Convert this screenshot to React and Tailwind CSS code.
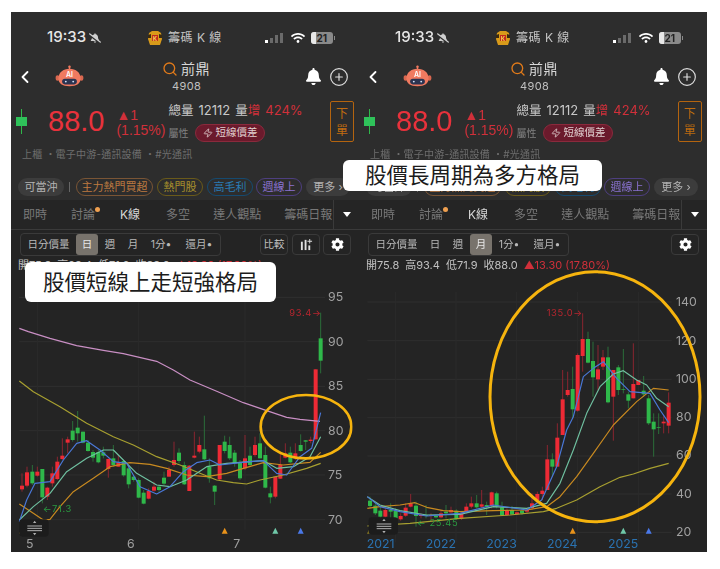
import React from 'react';
import { ChevronLeft, Search, CirclePlus, Zap } from 'lucide-react';
import { FaBell, FaBellSlash, FaWifi, FaCog } from 'react-icons/fa';

const RED = '#ee2a35';
const GREEN = '#2fb84a';

// candles: x, wick top, wick bottom, body top, body bottom, colour (3x zoom coords)
const leftCandles = [
  [66,550,605,587,598,'r'],[81,530,592,547,587,'r'],[97,525,585,545,580,'g'],[112,530,560,545,557,'r'],
  [127,537,640,537,622,'g'],[142,590,630,593,620,'r'],[157,530,590,550,580,'r'],[172,500,570,515,567,'r'],
  [187,445,510,497,507,'r'],[203,440,490,448,458,'r'],[218,393,455,422,450,'g'],[233,363,455,413,430,'g'],
  [249,425,460,425,458,'g'],[264,450,485,458,483,'g'],[279,480,515,486,503,'g'],[295,480,520,486,517,'g'],
  [310,470,505,487,497,'g'],[325,505,563,507,537,'r'],[340,465,530,505,525,'g'],[355,495,530,517,530,'r'],
  [371,510,560,513,556,'g'],[386,530,595,535,583,'g'],[401,555,575,560,570,'g'],[416,565,625,570,623,'g'],
  [431,600,643,608,641,'g'],[446,595,628,603,626,'r'],[462,575,605,590,602,'r'],[477,585,605,590,600,'g'],
  [492,545,585,563,581,'g'],[507,530,560,540,560,'r'],[522,455,530,510,525,'r'],[537,475,520,488,513,'g'],
  [553,515,585,525,583,'g'],[568,525,603,527,603,'r'],[583,425,505,497,503,'r'],[598,440,490,465,485,'r'],
  [613,377,510,478,508,'g'],[628,505,578,530,565,'g'],[644,585,645,587,605,'g'],[659,465,570,465,568,'r'],
  [674,437,490,455,483,'g'],[689,440,510,465,505,'g'],[704,480,530,488,520,'g'],[720,510,570,517,565,'g'],
  [735,435,540,505,535,'r'],[750,470,530,497,525,'g'],[765,440,500,465,495,'r'],[780,430,505,460,505,'g'],
  [796,470,595,495,593,'g'],[811,590,640,610,622,'g'],[826,560,625,560,620,'r'],[841,490,567,525,566,'r'],
  [856,460,505,490,503,'r'],[871,470,520,488,517,'g'],[886,460,510,490,505,'r'],[902,433,485,465,483,'g'],
  [917,450,480,451,455,'g'],[932,440,460,449,453,'r'],[947,238,448,238,448,'r'],[962,68,250,145,212,'g'],
];

const rightCandles = [
  [30,680,715,692,708,'g'],[46,700,735,707,730,'g'],[61,710,745,722,740,'g'],[76,710,745,720,740,'r'],
  [92,700,745,720,725,'g'],[107,715,750,722,745,'g'],[122,730,752,738,748,'r'],[137,700,740,713,737,'r'],
  [152,672,712,700,710,'r'],[168,695,770,707,738,'g'],[183,730,745,735,738,'r'],[198,705,745,735,738,'g'],
  [213,730,752,735,737,'r'],[228,735,745,738,742,'g'],[243,720,745,730,742,'r'],[258,705,745,725,730,'g'],
  [273,710,730,720,727,'r'],[289,718,748,722,746,'g'],[304,725,750,730,746,'r'],[319,700,730,710,725,'r'],
  [334,680,715,700,710,'r'],[350,675,715,700,712,'g'],[365,660,715,703,710,'r'],[380,695,735,705,710,'g'],
  [395,665,715,667,708,'r'],[410,665,715,670,710,'g'],[426,695,738,712,735,'g'],[441,715,738,722,735,'r'],
  [456,708,735,720,733,'g'],[471,725,735,727,733,'r'],[486,715,735,722,730,'g'],[501,715,730,720,725,'r'],
  [516,670,720,700,715,'r'],[532,665,700,672,690,'r'],[547,650,690,662,672,'r'],[562,525,660,568,660,'r'],
  [577,550,620,568,590,'g'],[592,460,590,503,590,'r'],[608,300,495,388,495,'r'],[623,305,380,360,375,'r'],
  [638,290,445,357,418,'g'],[653,250,425,255,422,'r'],[668,130,305,207,258,'r'],[684,185,280,207,278,'g'],
  [699,215,380,273,322,'g'],[714,225,360,298,328,'r'],[729,240,300,262,290,'r'],[744,230,400,262,397,'g'],
  [760,300,512,300,380,'r'],[775,285,375,292,360,'g'],[790,237,370,358,360,'g'],[805,365,415,373,392,'g'],
  [820,220,385,342,385,'r'],[835,330,345,330,345,'r'],[851,318,380,362,373,'g'],[866,375,465,385,460,'g'],
  [881,430,560,455,478,'g'],[896,430,492,472,474,'g'],[911,435,490,455,460,'r'],[926,367,490,398,467,'r'],
];

const leftLines = [
  ['#c98fc4','58,115 85,125 150,145 230,167 310,181 370,191 470,214 520,240 570,270 650,304 730,338 800,362 860,382 900,388 960,394'],
  ['#a8a030','58,273 100,305 180,350 260,400 340,440 400,465 470,500 540,525 600,550 650,570 700,578 740,582 780,570 850,555 920,535 962,520'],
  ['#c98a20','58,642 100,670 130,690 150,688 180,650 220,605 280,565 330,530 390,518 450,523 500,535 560,555 620,560 680,550 720,538 790,518 850,525 930,517 962,487'],
  ['#6fc0a0','58,690 100,650 150,610 200,545 260,505 310,480 340,480 370,510 410,550 470,585 510,590 560,570 620,530 680,520 750,515 790,512 830,535 880,530 930,500 962,440'],
  ['#4a78d8','58,695 80,630 105,580 150,575 190,510 230,460 260,452 300,480 340,515 380,520 420,590 470,612 510,590 550,545 590,518 630,510 660,525 700,520 750,515 790,512 830,550 860,555 900,500 935,475 962,368'],
];

const rightLines = [
  ['#a8a030','22,768 150,760 300,745 450,735 550,725 590,715 650,690 720,650 780,622 820,612 870,595 926,580'],
  ['#c98a20','22,715 60,710 120,705 165,698 200,712 250,722 300,725 400,722 500,720 560,710 600,680 650,620 700,550 760,465 830,395 880,355 926,360'],
  ['#6fc0a0','22,680 60,705 120,722 200,735 300,733 400,710 500,715 560,700 600,640 640,540 680,430 720,350 760,312 790,302 830,330 860,345 890,385 926,410'],
  ['#4a78d8','22,680 60,710 120,725 200,738 300,730 400,705 500,720 545,690 590,590 620,480 640,440 670,320 700,295 730,275 770,325 810,365 870,370 900,420 926,458'],
];

function Chart({ viewBox, candles, lines, grid, vGrid, gridFrom, gridTo, yLabels, labelX, xLabels, xColor, candleW, high, low, markers, handleX, handleY, ring }) {
  return (
    <svg viewBox={viewBox} className="h-full w-full overflow-visible">
      {grid.map(y => <line key={y} x1={gridFrom} x2={gridTo} y1={y} y2={y} stroke="#2f2f2f" strokeWidth="3" />)}
      {vGrid.map(x => <line key={x} x1={x} x2={x} y1={grid[0] - 30} y2={grid[grid.length - 1] + 30} stroke="#2b2b2b" strokeWidth="3" />)}
      {candles.map(([x, wt, wb, bt, bb, c]) => (
        <g key={x}>
          <line x1={x} x2={x} y1={wt} y2={wb} stroke={c === 'r' ? '#8a2530' : '#2b6e3a'} strokeWidth="3" />
          <rect x={x - candleW / 2} y={bt} width={candleW} height={bb - bt} fill={c === 'r' ? RED : GREEN} />
        </g>
      ))}
      {lines.map(([color, pts]) => <polyline key={color} points={pts} fill="none" stroke={color} strokeWidth="3.5" strokeLinejoin="round" />)}
      {yLabels.map(([t, y]) => <text key={t} x={labelX} y={y + 12} fontSize="37" fill="#a0a0a0">{t}</text>)}
      {xLabels.map(([t, x, y]) => <text key={t} x={x} y={y} fontSize="37" fill={xColor}>{t}</text>)}
      <text x={high[1]} y={high[2]} fontSize="28" letterSpacing="2" fill="#b8262f">{high[0]}</text>
      <text x={low[1]} y={low[2]} fontSize="28" letterSpacing="2" fill="#2a9a40">{low[0]}</text>
      {markers.map(([x, y, color]) => <polygon key={x} points={`${x - 9},${y + 9} ${x + 9},${y + 9} ${x},${y - 9}`} fill={color} />)}
      <rect x={handleX} y={handleY} width="88" height="52" rx="10" fill="#1c1c1c" />
      <path d={`M${handleX + 24} ${handleY + 20}h44M${handleX + 24} ${handleY + 27}h44M${handleX + 24} ${handleY + 34}h44`} stroke="#b0b0b0" strokeWidth="3" />
      <path d={`M${handleX + 46} ${handleY + 4}l5 7h-10zM${handleX + 46} ${handleY + 48}l5 -7h-10z`} fill="#b0b0b0" />
      <ellipse cx={ring[0]} cy={ring[1]} rx={ring[2]} ry={ring[3]} fill="none" stroke="#f6b40e" strokeWidth={ring[4]} />
    </svg>
  );
}

function AppMark() {
  return (
    <svg viewBox="0 0 16 16" className="h-4 w-4">
      <path d="M2 3l3-2h6l3 2 1 6-2 6H3L1 9z" fill="#d89a1a" />
      <path d="M5 5h6v6H5z" fill="#c3281e" />
      <path d="M1 5l3-1v4H1zM15 5l-3-1v4h3z" fill="#3a2a10" />
      <text x="8" y="10.5" fontSize="6" fontWeight="700" textAnchor="middle" fill="#f5d050">K</text>
    </svg>
  );
}

function Robot() {
  return (
    <svg viewBox="0 0 30 26" className="h-[24px] w-[29px]">
      <path d="M15 1v4" stroke="#f07a60" strokeWidth="1.5" />
      <circle cx="15" cy="1.8" r="1.3" fill="#f07a60" />
      <rect x="0" y="11" width="4" height="6" rx="2" fill="#d9674f" />
      <rect x="26" y="11" width="4" height="6" rx="2" fill="#d9674f" />
      <path d="M3 15C3 8 8 4 15 4s12 4 12 11c0 5-4 8-12 8S3 20 3 15z" fill="#f07a60" />
      <rect x="7" y="15" width="16" height="6" rx="3" fill="#2b3350" />
      <circle cx="11" cy="18" r="1" fill="#d8e4f8" />
      <circle cx="19" cy="18" r="1" fill="#d8e4f8" />
      <text x="15" y="13.5" fontSize="7.5" fontWeight="600" textAnchor="middle" fill="#fff">AI</text>
    </svg>
  );
}

function Signal() {
  return (
    <div className="flex h-[10px] items-end gap-[2px]">
      <span className="h-[3px] w-[3px] bg-white" />
      <span className="h-[5px] w-[3px] bg-[#6a6a6a]" />
      <span className="h-[8px] w-[3px] bg-[#6a6a6a]" />
      <span className="h-[10px] w-[3px] bg-[#6a6a6a]" />
    </div>
  );
}

function Battery() {
  return (
    <div className="flex items-center gap-[1px]">
      <div className="relative flex h-[12px] w-[22px] items-center justify-center overflow-hidden rounded-[3px] bg-[#8a8a8a]">
        <span className="absolute inset-y-0 left-0 w-[5px] bg-[#e8e8e8]" />
        <span className="relative text-[10px] font-bold leading-none text-[#222]">21</span>
      </div>
      <span className="h-[4px] w-[1px] bg-[#8a8a8a]" />
    </div>
  );
}

function Chip({ className, children }) {
  return <span className={`flex h-[18px] items-center justify-center rounded-full border text-[11px] leading-none ${className}`}>{children}</span>;
}

function Segment({ width, active, children }) {
  return (
    <span className={`flex h-[21px] items-center justify-center rounded-[3px] text-[10.5px] ${width} ${active ? 'bg-[#78736c] text-[#e8e8e8]' : 'text-[#b8b8b8]'}`}>
      {children}
    </span>
  );
}

function Phone({ period, showTools, chart }) {
  return (
    <div className="flex h-[540px] w-[348px] flex-col bg-[#242424] text-[#d0d0d0] blur-[0.45px]">
      <div className="bg-[#2d2d2d]">
        {/* status bar */}
        <div className="flex h-[43px] items-center pl-[36px] pt-[8px]">
          <span className="text-[15px] font-medium text-[#e6e6e6]">19:33</span>
          <FaBellSlash className="ml-[3px] text-[12px] text-[#cfcfcf]" />
          <span className="ml-[46px]"><AppMark /></span>
          <span className="ml-[5px] text-[12px] tracking-[0.5px] text-[#c4c4c4]">籌碼 K 線</span>
          <span className="ml-[43px]"><Signal /></span>
          <FaWifi className="ml-[8px] text-[14px] text-white" />
          <span className="ml-[6px]"><Battery /></span>
        </div>
        {/* header */}
        <div className="relative flex h-[43px] items-center pl-[4px]">
          <ChevronLeft className="h-[24px] w-[20px] text-white" strokeWidth={2.2} />
          <span className="ml-[20px]"><Robot /></span>
          <div className="ml-[78px] flex flex-col">
            <div className="flex items-center">
              <Search className="h-[16px] w-[16px] text-[#e07a1a]" strokeWidth={2} />
              <span className="ml-[3px] text-[14px] leading-[18px] tracking-[0.5px] text-[#d8d8d8]">前鼎</span>
            </div>
            <span className="ml-[10px] text-[11px] leading-[16px] tracking-[0.4px] text-[#c0c0c0]">4908</span>
          </div>
          <FaBell className="ml-[95px] text-[17px] text-white" />
          <CirclePlus className="ml-[7px] h-[20px] w-[20px] text-[#dedede]" strokeWidth={1.4} />
        </div>
        {/* quote */}
        <div className="flex h-[48px] items-start pl-[5px]">
          <div className="relative mt-[11px] h-[25px] w-[12px]">
            <span className="absolute inset-y-0 left-[5px] w-[1px] bg-[#2fb84a]" />
            <span className="absolute left-0 top-[8px] h-[9px] w-[11px] bg-[#2fc25a]" />
          </div>
          <span className="ml-[20px] mt-[7px] font-['Liberation_Sans',sans-serif] text-[29px] leading-[32px] text-[#e8323c]">88.0</span>
          <div className="ml-[12px] mt-[10px] font-['Liberation_Sans',sans-serif] text-[14px] leading-[15px] text-[#d0303a]">
            <div>▲1</div>
            <div>(1.15%)</div>
          </div>
          <div className="ml-[3px] mt-[4px] flex flex-col">
            <div className="flex h-[18px] items-center gap-[5px] text-[13px] text-[#c8c8c8]">
              <span className="text-[12.5px]">總量</span>
              <span>12112</span>
              <span className="text-[12.5px]">量<span className="text-[#d0303a]">增</span></span>
              <span className="text-[#d0303a]">424%</span>
            </div>
            <div className="mt-[4px] flex items-center">
              <span className="text-[10px] text-[#808080]">屬性</span>
              <span className="ml-[7px] flex h-[18px] w-[70px] items-center justify-center gap-[2px] rounded-full border border-[#8a2a3c] bg-[#6b1a2c] text-[10.5px] text-[#e0d0d0]">
                <Zap className="h-[10px] w-[10px]" strokeWidth={2} />
                短線價差
              </span>
            </div>
          </div>
          <div className="ml-auto mr-[5px] mt-[3px] flex h-[41px] w-[24px] flex-col items-center justify-center rounded-[2px] border border-[#b4640f] text-[12px] leading-[17px] text-[#c06c10]">
            <span>下</span>
            <span>單</span>
          </div>
        </div>
        {/* tags */}
        <div className="h-[18px] pl-[11px] text-[10px] leading-[16px] tracking-[0.2px] text-[#6e6e6e]">上櫃 ・電子中游-通訊設備 ・#光通訊</div>
        {/* chips */}
        <div className="flex h-[36px] items-center pb-[1px] pl-[7px] pt-[11px]">
          <Chip className="w-[46px] border-transparent bg-[#3c3c3c] text-[#b4b4b4]">可當沖</Chip>
          <span className="ml-[5px] h-[10px] w-[1px] bg-[#666]" />
          <Chip className="ml-[6px] w-[77px] border-[#7a5535] text-[#bd7a40]">主力熱門買超</Chip>
          <Chip className="ml-[4px] w-[46px] border-[#6a5a1a] text-[#a8902c]">熱門股</Chip>
          <Chip className="ml-[4px] w-[46px] border-[#154a70] text-[#2a7cb5]">高毛利</Chip>
          <Chip className="ml-[3px] w-[46px] border-[#4e3f80] text-[#8a72d0]">週線上</Chip>
          <Chip className="ml-[4px] w-[44px] border-transparent bg-[#3c3c3c] text-[#b4b4b4]">更多 ›</Chip>
        </div>
      </div>
      {/* tabs */}
      <div className="flex h-[30px] items-center border-b border-[#3a3a3a] bg-[#252525] text-[12px] text-[#787878]">
        <div className="flex h-full w-[322px] items-center overflow-hidden whitespace-nowrap pl-[12px]">
          <span>即時</span>
          <span className="relative ml-[24px]">
            討論
            <span className="absolute -right-[5px] top-[1px] h-[5px] w-[5px] rounded-full bg-[#f0a050]" />
          </span>
          <span className="ml-[25px] text-[#d8d8d8]">K線</span>
          <span className="ml-[26px]">多空</span>
          <span className="ml-[23px]">達人觀點</span>
          <span className="ml-[23px]">籌碼日報</span>
        </div>
        <div className="flex h-full flex-1 items-center justify-center border-l border-[#3a3a3a]">
          <span className="border-x-[4px] border-t-[5px] border-x-transparent border-t-white" />
        </div>
      </div>
      {/* toolbar */}
      <div className="flex h-[28px] items-center pl-[9px] pt-[1px]">
        <div className="flex h-[23px] w-[201px] items-center rounded-[4px] border border-[#3a3a3a]">
          <Segment width="w-[55px]">日分價量</Segment>
          <Segment width="w-[22px]" active={period === '日'}>日</Segment>
          <Segment width="w-[24px]" active={period === '週'}>週</Segment>
          <Segment width="w-[22px]" active={period === '月'}>月</Segment>
          <Segment width="w-[34px]">1分•</Segment>
          <Segment width="w-[42px]">還月•</Segment>
        </div>
        {showTools && (
          <div className="ml-[39px] flex h-[21px] w-[28px] items-center justify-center rounded-[4px] border border-[#3a3a3a] text-[10.5px] text-[#c0c0c0]">比較</div>
        )}
        {showTools && (
          <div className="ml-[4px] flex h-[21px] w-[28px] items-center justify-center rounded-[4px] border border-[#3a3a3a]">
            <svg viewBox="0 0 14 14" className="h-[13px] w-[13px]" fill="#e0e0e0">
              <rect x="1" y="4" width="2" height="9" />
              <rect x="5" y="2" width="2" height="11" />
              <rect x="9" y="8" width="2" height="5" />
              <path d="M10 1h1v2h2v1h-2v2h-1V4H8V3h2z" />
            </svg>
          </div>
        )}
        <div className={`flex h-[21px] w-[28px] items-center justify-center rounded-[4px] border border-[#3a3a3a] ${showTools ? 'ml-[3px]' : 'ml-[102px]'}`}>
          <FaCog className="text-[13px] text-white" />
        </div>
      </div>
      {/* ohlc */}
      <div className="flex h-[14px] items-center whitespace-nowrap pl-[7px] text-[11px] leading-none text-[#c0c0c0]">
        開75.8 <span className="ml-[6px]">高93.4</span> <span className="ml-[6px]">低71.9</span> <span className="ml-[6px]">收88.0</span>
        <span className="ml-[6px] text-[#d0303a]">▲13.30 (17.80%)</span>
      </div>
      <div className="relative min-h-0 flex-1">{chart}</div>
    </div>
  );
}

export default function App() {
  return (
    <div className="relative flex h-[569px] w-[720px] overflow-hidden bg-white pl-[11px] pt-[12px] font-['Inter','Noto_Sans_CJK_TC',sans-serif]">
      <Phone
        period="日"
        showTools
        chart={
          <Chart
            viewBox="33 -54 1044 840"
            candles={leftCandles}
            lines={leftLines}
            grid={[22, 155, 289, 422, 555, 689]}
            vGrid={[112, 415, 735]}
            gridFrom={58}
            gridTo={975}
            yLabels={[['95', 22], ['90', 155], ['85', 289], ['80', 422], ['75', 555], ['70', 689]]}
            labelX={984}
            xLabels={[['5', 78, 773], ['6', 381, 773], ['7', 700, 773]]}
            xColor="#a0a0a0"
            candleW={12}
            high={['93.4→', 868, 78]}
            low={['←71.3', 128, 666]}
            markers={[[66, 722, '#8a7a20'], [674, 722, '#e8921a'], [826, 722, '#6fc8a8'], [902, 722, '#4a78e8']]}
            handleX={58}
            handleY={688}
            ring={[918, 410, 136, 95, 8]}
          />
        }
      />
      <Phone
        period="月"
        chart={
          <Chart
            viewBox="-3 6 1044 840"
            candles={rightCandles}
            lines={rightLines}
            grid={[96, 212, 328, 443, 558, 672, 787]}
            vGrid={[107, 288, 470, 652, 835]}
            gridFrom={22}
            gridTo={935}
            yLabels={[['140', 96], ['120', 212], ['100', 328], ['80', 441], ['60', 556], ['40', 672], ['20', 787]]}
            labelX={948}
            xLabels={[['2021', 20, 833], ['2022', 197, 833], ['2023', 379, 833], ['2024', 561, 833], ['2025', 744, 833]]}
            xColor="#2a72b0"
            candleW={12}
            high={['135.0→', 560, 138]}
            low={['← 25.45', 170, 768]}
            markers={[[30, 782, '#8a7a20'], [638, 782, '#e8921a'], [790, 782, '#6fc8a8'], [866, 782, '#4a78e8']]}
            handleX={26}
            handleY={742}
            ring={[705, 380, 315, 375, 9]}
          />
        }
      />
      {/* callouts */}
      <div className="absolute left-[25px] top-[262px] flex h-[40px] w-[251px] items-center justify-center rounded-[6px] bg-white text-[21.5px] text-[#1c1c1c]">股價短線上走短強格局</div>
      <div className="absolute left-[343px] top-[160px] flex h-[31px] w-[259px] items-center justify-center rounded-[6px] bg-white text-[21.5px] text-[#1c1c1c]">股價長周期為多方格局</div>
    </div>
  );
}
